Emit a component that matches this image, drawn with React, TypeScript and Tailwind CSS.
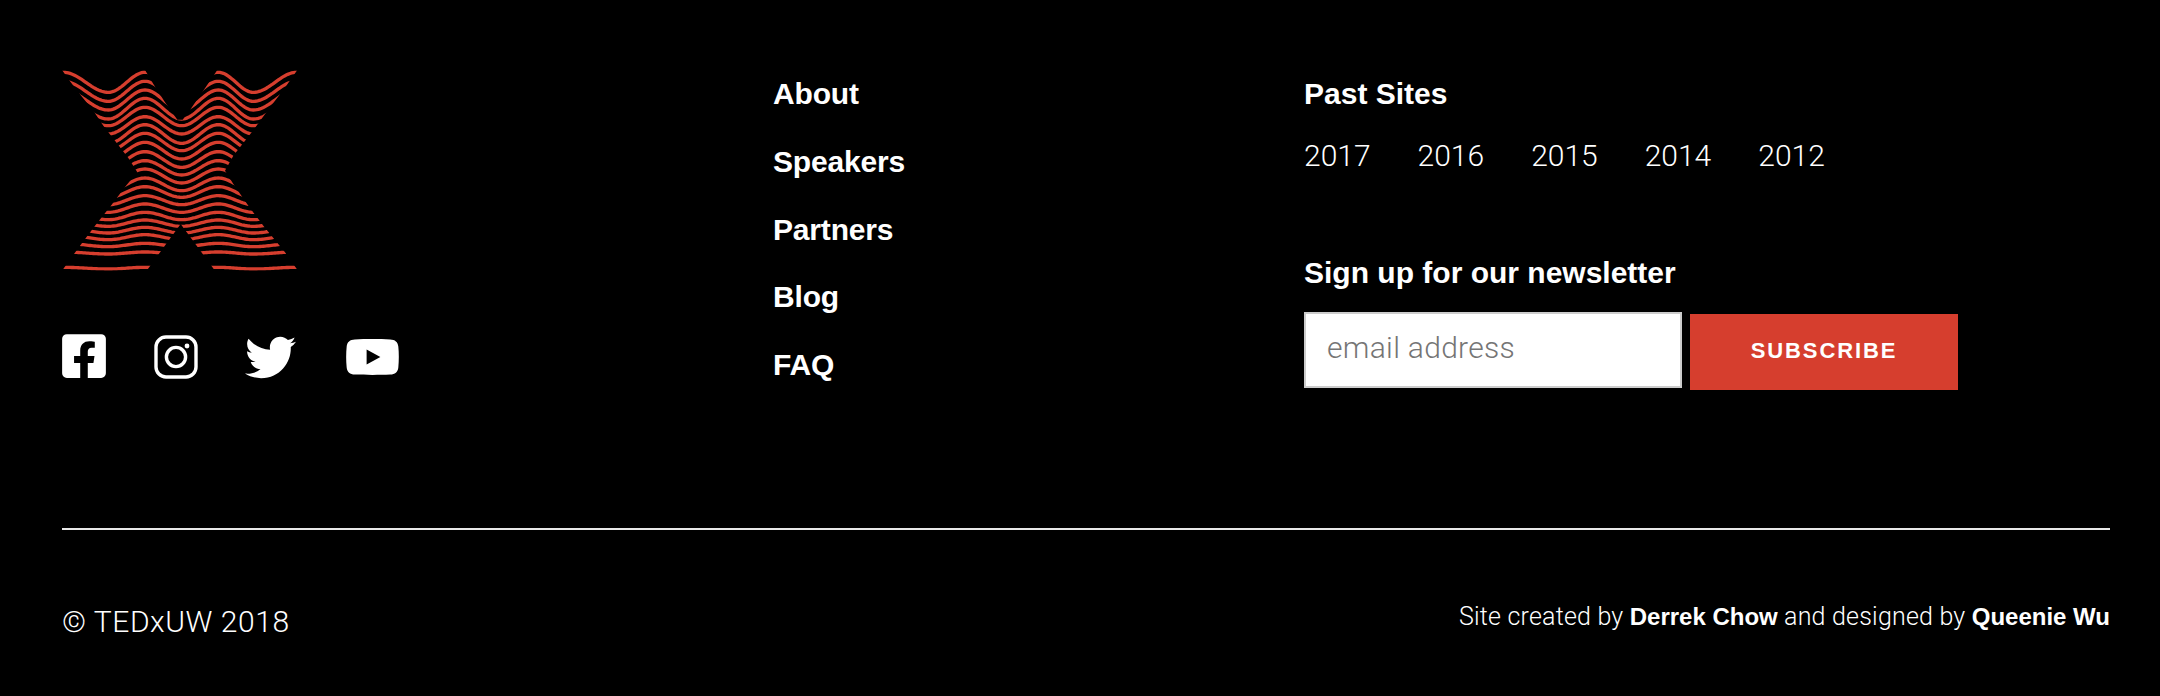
import React from "react";
import { FaFacebookSquare, FaTwitter } from "react-icons/fa";

const KX = [40, 175, 285, 395, 505, 610, 740];
const PEAK = [65, 92, 118, 143, 170, 198, 222, 248, 275, 303, 330, 355, 382, 408, 435, 460, 485, 508, 530, 552, 578, 604, 650];
const TROUGH = [125, 152, 178, 205, 225, 250, 278, 300, 325, 350, 373, 397, 420, 440, 462, 485, 507, 527, 547, 567, 588, 610, 655];

function wavePath(i: number) {
  const pts: string[] = [];
  for (let x = 20; x <= 760; x += 5) {
    const clamped = Math.min(739.9, Math.max(40, x));
    let k = 0;
    while (KX[k + 1] < clamped) k++;
    const t = (clamped - KX[k]) / (KX[k + 1] - KX[k]);
    const s = (1 - Math.cos(Math.PI * t)) / 2;
    const a = k % 2 === 0 ? PEAK[i] : TROUGH[i];
    const b = k % 2 === 0 ? TROUGH[i] : PEAK[i];
    pts.push(`${x},${(a + (b - a) * s).toFixed(1)}`);
  }
  return "M" + pts.join("L");
}

function Logo() {
  return (
    <svg width="236" height="202" viewBox="36 58 708 606" className="block">
      <defs>
        <clipPath id="x-shape">
          <polygon points="36,58 285,58 310,100 345,155 382,207 398,207 420,178 470,105 502,58 742,58 700,118 660,170 605,245 550,315 525,360 550,400 595,465 640,525 705,605 744,660 495,660 392,520 290,660 36,660 90,585 135,525 185,462 228,405 262,365 235,322 195,270 160,225 130,180 85,125 60,92" />
        </clipPath>
      </defs>
      <g clipPath="url(#x-shape)" fill="none" stroke="#d63e2e" strokeWidth="10">
        {PEAK.map((_, i) => (
          <path key={i} d={wavePath(i)} />
        ))}
      </g>
    </svg>
  );
}

function Instagram() {
  return (
    <svg width="44" height="44" viewBox="0 0 44 44" fill="none" stroke="white" className="block">
      <rect x="2" y="2" width="40" height="40" rx="10" strokeWidth="3.4" />
      <circle cx="22" cy="22" r="9.6" strokeWidth="3.4" />
      <circle cx="33" cy="11" r="2.4" fill="white" stroke="none" />
    </svg>
  );
}

function Youtube() {
  return (
    <svg width="53" height="36" viewBox="0 0 54 38" preserveAspectRatio="none" className="block">
      <path
        fillRule="evenodd"
        fill="white"
        d="M9 0.5C20 0 34 0 45 0.5C50 0.8 52.8 3 53.3 8C54 15 54 23 53.3 30C52.8 35 50 37.2 45 37.5C34 38 20 38 9 37.5C4 37.2 1.2 35 0.7 30C0 23 0 15 0.7 8C1.2 3 4 0.8 9 0.5ZM21 11V27L35 19Z"
      />
    </svg>
  );
}

export default function App() {
  const years = ["2017", "2016", "2015", "2014", "2012"];
  const nav = ["About", "Speakers", "Partners", "Blog", "FAQ"];
  const light = "font-['Roboto',sans-serif] font-light";
  return (
    <div className="w-full h-[696px] bg-black text-white pl-[62px] pr-[50px] font-['Liberation_Sans',sans-serif] overflow-hidden">
      <div className="flex h-[528px] pt-[68px]">
        <div className="w-[711px]">
          <div className="pt-[2px]">
            <Logo />
          </div>
          <div className="flex items-center mt-[63px] h-[44px]">
            <FaFacebookSquare className="w-[50px] h-[50px] -ml-[3px] -mt-[2px] text-white" />
            <div className="ml-[45px]"><Instagram /></div>
            <FaTwitter className="ml-[47px] w-[51px] h-[51px] text-white" />
            <div className="ml-[50px]"><Youtube /></div>
          </div>
        </div>
        <nav className="w-[531px] pt-[9px] flex flex-col gap-[33.75px] text-[30px] leading-[34px] font-bold tracking-[-0.17px]">
          {nav.map((n) => (
            <a key={n}>{n}</a>
          ))}
        </nav>
        <div className="pt-[9px]">
          <h3 className="text-[30px] leading-[34px] font-bold">Past Sites</h3>
          <div className={`flex gap-[47px] mt-[28px] text-[30px] leading-[34px] ${light}`}>
            {years.map((y) => (
              <a key={y}>{y}</a>
            ))}
          </div>
          <h3 className="mt-[83px] text-[30px] leading-[34px] font-bold">Sign up for our newsletter</h3>
          <div className="flex items-start gap-[8px] mt-[22px]">
            <input
              placeholder="email address"
              className={`w-[378px] h-[76px] bg-white border-[2px] border-[#cccccc] pl-[21px] pb-[6px] text-[30px] tracking-[0.3px] text-black placeholder:text-[#757575] outline-none ${light}`}
            />
            <button className="w-[268px] h-[76px] mt-[2px] pb-[3px] bg-[#d63e2e] text-white text-[22px] font-bold tracking-[1.9px]">
              SUBSCRIBE
            </button>
          </div>
        </div>
      </div>
      <div className="h-[2px] bg-[#e8e8e8]" />
      <div className="flex justify-between items-start pt-[72px]">
        <p className={`mt-[3px] text-[30px] leading-[34px] tracking-[0.55px] ${light}`}>© TEDxUW 2018</p>
        <p className={`text-[25px] leading-[30px] tracking-[0.2px] ${light}`}>
          Site created by <strong className="text-[24px] tracking-normal font-bold font-['Liberation_Sans',sans-serif]">Derrek Chow</strong> and designed by{" "}
          <strong className="text-[24px] tracking-normal font-bold font-['Liberation_Sans',sans-serif]">Queenie Wu</strong>
        </p>
      </div>
    </div>
  );
}
